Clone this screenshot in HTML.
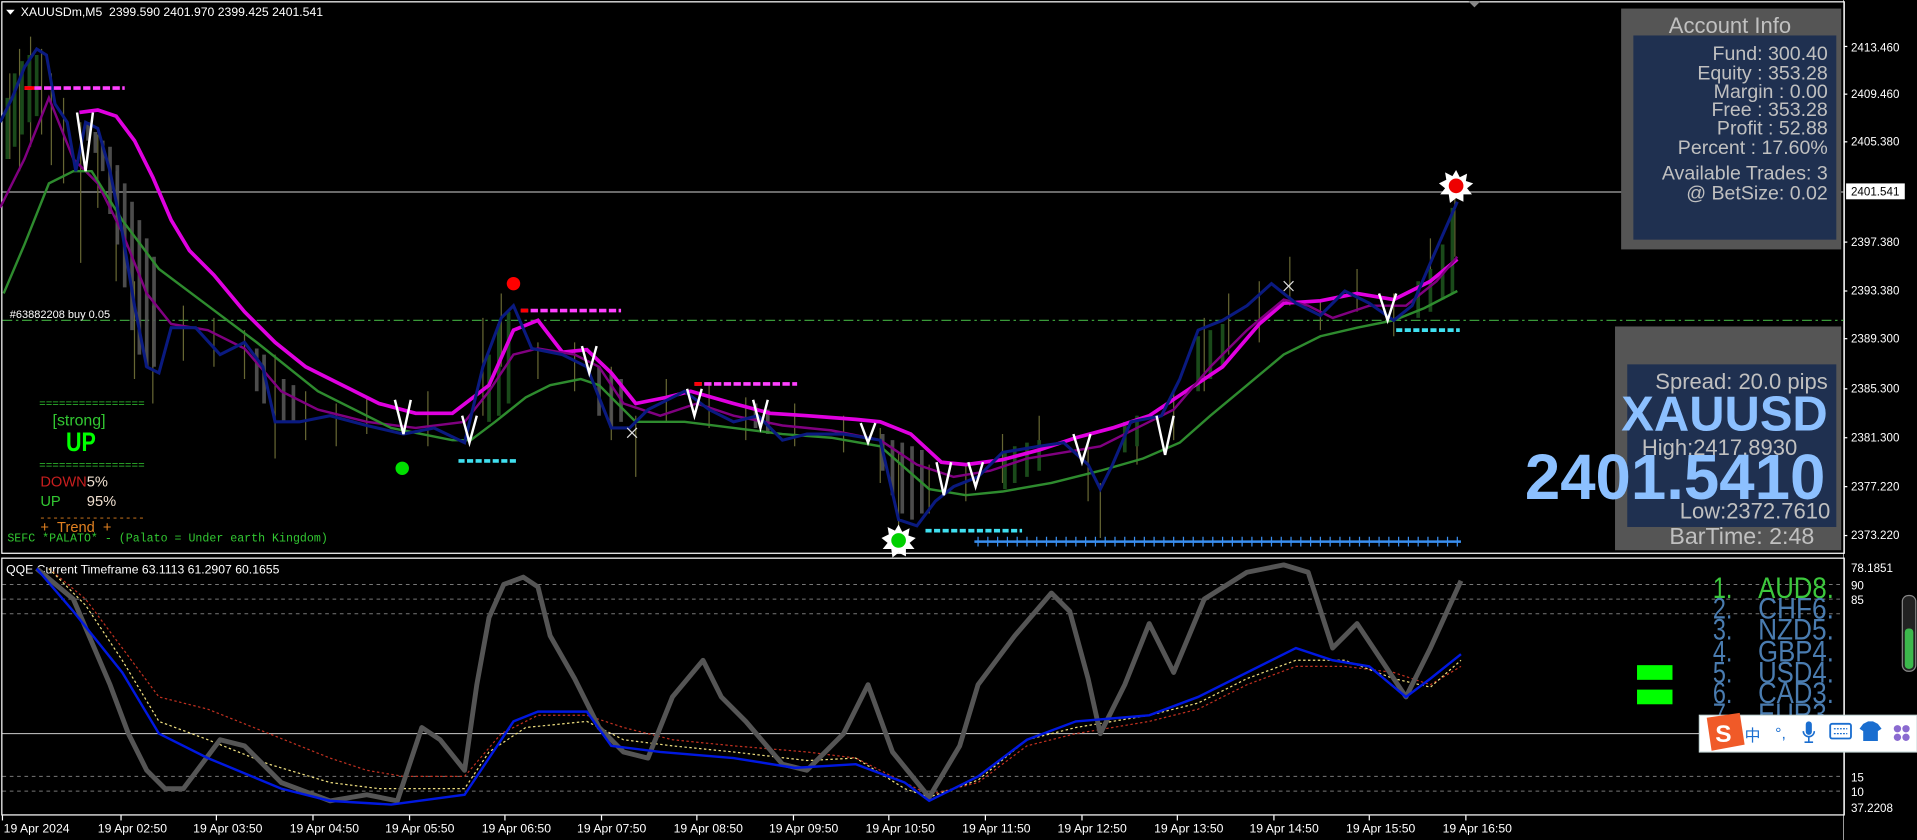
<!DOCTYPE html>
<html><head><meta charset="utf-8"><style>
html,body{margin:0;padding:0;background:#000;overflow:hidden}
svg{display:block}
text{font-family:"Liberation Sans",sans-serif}
.m{font-family:"Liberation Mono","DejaVu Sans Mono",monospace}
</style></head><body>
<svg width="1917" height="840" viewBox="0 0 1568 687" preserveAspectRatio="none" xmlns="http://www.w3.org/2000/svg" xml:space="preserve">
<rect width="1568" height="687" fill="#000"/>
<rect x="1.5" y="1.5" width="1507" height="451" fill="none" stroke="#fff" stroke-width="1"/>
<rect x="1.5" y="456.5" width="1507" height="210" fill="none" stroke="#fff" stroke-width="1"/>
<line x1="1508" y1="0" x2="1508" y2="687" stroke="#fff" stroke-width="0.5"/>
<polygon points="1201,1 1211,1 1206,6" fill="#888"/>
<polygon points="5,8 12,8 8.5,12" fill="#fff"/>
<text x="17" y="13" font-size="10" fill="#fff">XAUUSDm,M5&#160;&#160;2399.590 2401.970 2399.425 2401.541</text>
<g font-size="9.5" fill="#fff">
<text x="1514" y="42">2413.460</text><text x="1514" y="80">2409.460</text><text x="1514" y="119">2405.380</text>
<text x="1514" y="201">2397.380</text><text x="1514" y="241">2393.380</text><text x="1514" y="280">2389.300</text>
<text x="1514" y="321">2385.300</text><text x="1514" y="361">2381.300</text><text x="1514" y="401">2377.220</text><text x="1514" y="441">2373.220</text>
</g>
<g stroke="#fff" stroke-width="1"><line x1="1508" y1="38" x2="1511" y2="38"/><line x1="1508" y1="77" x2="1511" y2="77"/><line x1="1508" y1="116" x2="1511" y2="116"/><line x1="1508" y1="198" x2="1511" y2="198"/><line x1="1508" y1="238" x2="1511" y2="238"/><line x1="1508" y1="277" x2="1511" y2="277"/><line x1="1508" y1="318" x2="1511" y2="318"/><line x1="1508" y1="358" x2="1511" y2="358"/><line x1="1508" y1="398" x2="1511" y2="398"/><line x1="1508" y1="438" x2="1511" y2="438"/></g>
<line x1="2" y1="157" x2="1508" y2="157" stroke="#aaa" stroke-width="1"/>
<rect x="1510" y="150" width="48" height="13" fill="#fff"/>
<text x="1514" y="160" font-size="9.5" fill="#000">2401.541</text>
<line x1="2" y1="262" x2="1508" y2="262" stroke="#3a9a3a" stroke-width="1" stroke-dasharray="8,3,2,3"/>
<text x="8" y="260" font-size="9" fill="#fff">#63882208 buy 0.05</text>
<g stroke="#666633" stroke-width="1">
<path d="M8,60V130M16,40V140M25,30V120M34,40V110M42,60V135M52,80V150M66,100V215M80,110V170M95,140V230M110,230V310M125,250V330M150,250V295M175,260V300M200,270V310M225,290V375M250,320V360M275,330V365M300,325V355M350,320V365M395,260V340M410,240V300M440,280V310M470,280V320M500,300V360M520,340V390M545,310V345M580,315V350M610,325V360M650,330V365M690,340V370M720,350V395M735,370V430M760,380V420M790,380V410M820,355V395M850,340V380M890,360V410M900,395V440M930,340V380M960,320V360M985,260V320M1005,240V290M1030,230V280M1055,210V250M1080,245V270M1110,220V255M1140,240V275M1170,195V240M1190,150V210"/>
</g>
<g stroke="#555" stroke-width="3" opacity="0.9">
<path d="M72,100V115M78,108V125M84,115V140M90,120V175M96,135V200M102,150V235M108,165V270M114,180V290M120,195V300M126,210V300M210,285V320M216,290V330M232,310V345M240,315V345M490,300V340M500,305V350M508,310V345M618,330V350M628,335V355M722,355V385M730,360V405M738,362V420M746,365V425M754,368V420"/>
</g>
<g stroke="#1a4a1a" stroke-width="3">
<path d="M6,80V130M12,60V120M18,50V110M24,45V100M30,45V95M400,290V345M408,265V340M416,255V330M822,370V400M830,365V395M840,362V390M850,360V385M920,345V370M930,340V365M980,275V320M990,270V310M1000,265V300M1160,230V260M1170,220V255M1180,200V245M1188,170V240"/>
</g>
<polyline fill="none" stroke="#e000e0" stroke-width="3" points="65,92 80,90 95,95 110,115 125,145 140,180 155,205 175,225 200,255 225,280 250,300 280,315 310,330 340,338 370,338 400,315 420,270 440,262 460,288 480,286 500,305 520,330 545,325 565,320 600,330 630,338 660,340 700,343 720,345 745,355 770,378 790,380 820,376 850,368 880,358 910,350 940,340 970,320 1000,300 1030,265 1050,248 1080,246 1110,240 1140,245 1170,230 1192,212"/>
<polyline fill="none" stroke="#800080" stroke-width="2" points="0,170 20,130 40,80 60,130 80,150 100,190 120,240 140,265 170,270 200,285 230,320 260,335 300,345 340,350 380,345 400,320 420,290 440,285 470,290 490,300 510,330 540,340 570,330 600,340 640,348 680,352 720,360 750,380 780,390 810,385 840,375 870,370 900,365 930,350 960,335 990,300 1020,270 1050,245 1070,250 1090,260 1120,250 1150,250 1175,230 1192,210"/>
<polyline fill="none" stroke="#2e8b2e" stroke-width="2" points="3,240 20,200 40,150 60,140 75,140 100,180 130,220 170,250 210,280 260,320 320,350 370,360 385,360 405,345 430,325 450,315 475,310 490,315 520,345 560,345 600,350 640,355 680,358 720,365 760,400 790,405 820,402 860,395 900,385 935,375 965,362 990,340 1020,315 1050,290 1080,275 1110,268 1140,262 1165,252 1192,238"/>
<polyline fill="none" stroke="#0a1a80" stroke-width="2.5" points="0,100 10,80 20,55 30,40 38,45 45,85 55,100 62,140 70,100 80,105 90,140 100,190 110,250 120,300 130,305 140,268 160,268 180,290 200,280 215,300 225,345 245,345 270,340 300,348 330,355 355,350 380,362 395,300 410,260 420,250 435,285 460,290 480,300 500,350 515,350 530,335 560,320 580,335 600,345 620,340 640,360 660,355 690,355 720,360 735,425 750,430 765,410 780,398 800,390 820,370 850,365 870,362 890,380 900,400 910,380 925,345 950,340 965,310 980,270 1000,262 1020,250 1040,232 1060,248 1080,258 1100,238 1120,248 1140,262 1155,250 1170,215 1192,165"/>
<g fill="none" stroke="#fff" stroke-width="2">
<path d="M63,92L70,140L76,92M323,327L330,355L336,327M378,340L384,362L390,340M476,283L482,305L488,283M562,318L568,340L574,318M616,327L622,350L628,327M704,346L710,362L716,346M766,378L772,405L778,378M792,378L798,398L804,378M878,355L885,378L892,355M946,340L953,372L960,340M1128,240L1135,262L1142,240"/>
</g>
<g stroke-width="3" fill="none">
<line x1="20" y1="72" x2="102" y2="72" stroke="#ff40ff" stroke-dasharray="6,2"/><line x1="20" y1="72" x2="28" y2="72" stroke="#f00"/>
<line x1="426" y1="254" x2="508" y2="254" stroke="#ff40ff" stroke-dasharray="6,2"/><line x1="426" y1="254" x2="432" y2="254" stroke="#f00"/>
<line x1="568" y1="314" x2="652" y2="314" stroke="#ff40ff" stroke-dasharray="6,2"/><line x1="568" y1="314" x2="574" y2="314" stroke="#f00"/>
<line x1="375" y1="377" x2="424" y2="377" stroke="#40e0f0" stroke-dasharray="5,2"/>
<line x1="757" y1="434" x2="836" y2="434" stroke="#40e0f0" stroke-dasharray="5,2"/>
<line x1="1142" y1="270" x2="1194" y2="270" stroke="#40e0f0" stroke-dasharray="5,2"/>
<line x1="797" y1="443" x2="1195" y2="443" stroke="#3a8ff0" stroke-width="2"/>
</g>
<g stroke="#3a8ff0" stroke-width="1"><path d="M800,439V447M808,439V447M816,439V447M824,439V447M832,439V447M840,439V447M848,439V447M856,439V447M864,439V447M872,439V447M880,439V447M888,439V447M896,439V447M904,439V447M912,439V447M920,439V447M928,439V447M936,439V447M944,439V447M952,439V447M960,439V447M968,439V447M976,439V447M984,439V447M992,439V447M1000,439V447M1008,439V447M1016,439V447M1024,439V447M1032,439V447M1040,439V447M1048,439V447M1056,439V447M1064,439V447M1072,439V447M1080,439V447M1088,439V447M1096,439V447M1104,439V447M1112,439V447M1120,439V447M1128,439V447M1136,439V447M1144,439V447M1152,439V447M1160,439V447M1168,439V447M1176,439V447M1184,439V447M1192,439V447"/></g>
<g stroke="#ddd" stroke-width="1"><path d="M513,350l8,8M521,350l-8,8M1050,230l8,8M1058,230l-8,8"/></g>
<circle cx="420" cy="232" r="5.5" fill="#f00"/>
<circle cx="329" cy="383" r="5.5" fill="#00e000"/>
<polygon points="1191,139 1194,145 1200,142 1199,148 1205,150 1200,154 1204,159 1197,159 1197,165 1191,162 1186,166 1185,159 1178,159 1182,154 1177,150 1183,147 1182,141 1188,144" fill="#fff"/>
<circle cx="1191" cy="152" r="6" fill="#e00"/>
<polygon points="735,429 738,435 744,432 743,438 749,440 744,444 748,449 741,449 741,455 735,452 730,456 729,449 722,449 726,444 721,440 727,437 726,431 732,434" fill="#fff"/>
<circle cx="735" cy="442" r="6" fill="#00d000"/>
<g class="m" font-size="9">
<text x="32" y="333" fill="#32c832" class="m">================</text>
<text x="32" y="383" fill="#32c832" class="m">================</text>
<text x="32" y="426" fill="#e08020" class="m">----------------</text>
<text x="6" y="443" fill="#32c832" class="m" font-size="9.5">SEFC *PALATO* - (Palato = Under earth Kingdom)</text>
</g>
<text x="43" y="348" font-size="13" fill="#32c832">[strong]</text>
<text x="54" y="369" font-size="22" font-weight="bold" fill="#00ff00" transform="translate(54,0) scale(0.8,1) translate(-54,0)">UP</text>
<text x="33" y="398" font-size="12" fill="#c81e1e">DOWN<tspan fill="#f0e0d0">5%</tspan></text>
<text x="33" y="414" font-size="12" fill="#32c832">UP<tspan x="71" fill="#f0e0d0">95%</tspan></text>
<text x="33" y="435" font-size="12" fill="#e08020">+&#160;&#160;Trend&#160;&#160;+</text>
<rect x="1326" y="7" width="180" height="197" fill="#555"/>
<rect x="1336" y="29" width="166" height="167" fill="#1f3050"/>
<g font-size="16" fill="#c0c0c0" text-anchor="end">
<text x="1415" y="27" text-anchor="middle" font-size="18">Account Info</text>
<text x="1495" y="49">Fund: 300.40</text>
<text x="1495" y="65">Equity : 353.28</text>
<text x="1495" y="80">Margin : 0.00</text>
<text x="1495" y="95">Free : 353.28</text>
<text x="1495" y="110">Profit : 52.88</text>
<text x="1495" y="126">Percent : 17.60%</text>
<text x="1495" y="147">Available Trades: 3</text>
<text x="1495" y="163">@ BetSize: 0.02</text>
</g>
<rect x="1321" y="267" width="185" height="183" fill="#555"/>
<rect x="1331" y="298" width="171" height="133" fill="#1f3050"/>
<g text-anchor="end">
<text x="1495" y="318" font-size="18" fill="#c0c0c0">Spread: 20.0 pips</text>
<text x="1495" y="352" font-size="40" font-weight="bold" fill="#8cc0ff">XAUUSD</text>
<text x="1470" y="372" font-size="18" fill="#c0c0c0">High:2417.8930</text>
<text x="1493" y="408" font-size="52" font-weight="bold" fill="#8cc0ff">2401.5410</text>
<text x="1497" y="424" font-size="18" fill="#c0c0c0">Low:2372.7610</text>
<text x="1484" y="445" font-size="19" fill="#c0c0c0">BarTime: 2:48</text>
</g>
<text x="5" y="469" font-size="10" fill="#fff">QQE Current Timeframe 63.1113 61.2907 60.1655</text>
<g stroke="#777" stroke-width="0.8" stroke-dasharray="3,3">
<line x1="2" y1="478" x2="1508" y2="478"/><line x1="2" y1="490" x2="1508" y2="490"/><line x1="2" y1="502" x2="1508" y2="502"/>
<line x1="2" y1="635" x2="1508" y2="635"/><line x1="2" y1="647" x2="1508" y2="647"/>
</g>
<line x1="2" y1="600" x2="1508" y2="600" stroke="#ccc" stroke-width="0.8"/>
<g font-size="9.5" fill="#fff"><text x="1514" y="468">78.1851</text><text x="1514" y="482">90</text><text x="1514" y="494">85</text><text x="1514" y="639">15</text><text x="1514" y="651">10</text><text x="1514" y="664">37.2208</text></g>
<polyline fill="none" stroke="#c03020" stroke-width="1" stroke-dasharray="2,2" points="40,465 70,490 100,530 130,570 170,580 220,600 270,620 300,630 330,635 380,635 410,600 440,585 480,585 510,595 550,605 600,610 660,615 700,620 740,640 760,650 800,640 840,610 880,600 940,590 980,580 1020,560 1060,545 1100,545 1140,550 1170,560 1195,545"/>
<polyline fill="none" stroke="#f0e080" stroke-width="1" stroke-dasharray="2,2" points="40,465 70,495 100,540 130,590 170,605 220,625 270,640 310,645 340,645 380,645 400,615 430,595 480,590 510,605 550,610 600,615 660,622 700,620 740,645 760,652 800,638 840,605 880,595 940,585 980,575 1020,555 1060,540 1100,540 1140,555 1170,562 1195,540"/>
<polyline fill="none" stroke="#555" stroke-width="4" stroke-linejoin="round" points="30,465 60,490 75,525 90,560 105,600 120,630 135,645 150,645 165,625 180,605 200,610 230,640 270,655 300,650 325,655 345,595 360,605 380,630 390,560 400,505 412,478 428,472 440,480 450,520 470,555 490,595 510,615 530,620 550,570 575,540 590,570 610,590 640,625 660,630 690,600 710,560 730,615 760,652 785,610 800,560 830,520 860,485 875,500 890,555 900,600 920,560 940,510 960,550 985,490 1020,468 1050,462 1070,468 1090,530 1110,510 1130,540 1150,570 1170,530 1195,475"/>
<polyline fill="none" stroke="#0018e0" stroke-width="2" points="30,465 60,500 100,550 130,600 170,620 230,645 270,655 320,658 380,650 400,620 420,590 440,582 480,582 500,610 540,615 600,620 650,628 700,625 740,640 760,655 800,635 840,605 880,590 940,585 980,570 1020,550 1060,530 1090,540 1120,545 1150,570 1170,555 1195,535"/>
<rect x="1339" y="544" width="29" height="12" fill="#00ff00"/>
<rect x="1339" y="564" width="29" height="12" fill="#00ff00"/>
<g font-size="24">
<text x="1401" y="489" fill="#3cc83c" textLength="16" lengthAdjust="spacingAndGlyphs">1.</text><text x="1438" y="489" fill="#3cc83c" textLength="62" lengthAdjust="spacingAndGlyphs">AUD8.</text>
<g fill="#4a7cb0">
<text x="1401" y="506" textLength="16" lengthAdjust="spacingAndGlyphs">2.</text><text x="1438" y="506" textLength="62" lengthAdjust="spacingAndGlyphs">CHF6.</text>
<text x="1401" y="523" textLength="16" lengthAdjust="spacingAndGlyphs">3.</text><text x="1438" y="523" textLength="62" lengthAdjust="spacingAndGlyphs">NZD5.</text>
<text x="1401" y="541" textLength="16" lengthAdjust="spacingAndGlyphs">4.</text><text x="1438" y="541" textLength="62" lengthAdjust="spacingAndGlyphs">GBP4.</text>
<text x="1401" y="558" textLength="16" lengthAdjust="spacingAndGlyphs">5.</text><text x="1438" y="558" textLength="62" lengthAdjust="spacingAndGlyphs">USD4.</text>
<text x="1401" y="575" textLength="16" lengthAdjust="spacingAndGlyphs">6.</text><text x="1438" y="575" textLength="62" lengthAdjust="spacingAndGlyphs">CAD3.</text>
<text x="1401" y="592" textLength="16" lengthAdjust="spacingAndGlyphs">7.</text><text x="1438" y="592" textLength="62" lengthAdjust="spacingAndGlyphs">EUR3.</text>
</g></g>
<rect x="1556" y="487" width="11" height="62" rx="5" fill="#222" stroke="#888"/>
<rect x="1558" y="514" width="7" height="33" rx="3" fill="#3cb84c"/>
<rect x="1390" y="585" width="178" height="30" fill="#fff" stroke="#cdd"/>
<path d="M1396,587 L1423,583 L1427,609 L1400,614 Z" fill="#f05a28"/>
<text x="1403" y="607" font-size="20" font-weight="bold" fill="#fff">S</text>
<text x="1427" y="606" font-size="13" fill="#1a6ed0" font-family="Noto Sans CJK SC,sans-serif">中</text>
<text x="1452" y="604" font-size="13" fill="#1a6ed0">°,</text>
<rect x="1477" y="590" width="5" height="11" rx="2.5" fill="#1a6ed0"/><path d="M1475,598a4.5,4.5 0 0 0 9,0M1479.5,603v4M1476,607h7" stroke="#1a6ed0" fill="none" stroke-width="1.3"/>
<rect x="1497" y="592" width="17" height="12" rx="1.5" fill="none" stroke="#1a6ed0" stroke-width="1.5"/><path d="M1500,596h11M1500,600h11" stroke="#1a6ed0" stroke-dasharray="1.5,1"/>
<path d="M1524,592l4,-2h4l4,2l3,4l-3,2v8h-12v-8l-3,-2z" fill="#1a6ed0"/>
<g fill="#8a6ad0"><circle cx="1552" cy="596" r="3"/><circle cx="1559" cy="596" r="3"/><circle cx="1552" cy="603" r="3"/><circle cx="1559" cy="603" r="3"/></g>
<g stroke="#fff"><line x1="2" y1="667" x2="2" y2="671"/><line x1="99" y1="667" x2="99" y2="671"/><line x1="177" y1="667" x2="177" y2="671"/><line x1="256" y1="667" x2="256" y2="671"/><line x1="335" y1="667" x2="335" y2="671"/><line x1="413" y1="667" x2="413" y2="671"/><line x1="492" y1="667" x2="492" y2="671"/><line x1="570" y1="667" x2="570" y2="671"/><line x1="649" y1="667" x2="649" y2="671"/><line x1="727" y1="667" x2="727" y2="671"/><line x1="806" y1="667" x2="806" y2="671"/><line x1="885" y1="667" x2="885" y2="671"/><line x1="963" y1="667" x2="963" y2="671"/><line x1="1042" y1="667" x2="1042" y2="671"/><line x1="1120" y1="667" x2="1120" y2="671"/><line x1="1199" y1="667" x2="1199" y2="671"/></g>
<g font-size="10" fill="#fff">
<text x="3" y="681">19 Apr 2024</text><text x="80" y="681">19 Apr 02:50</text><text x="158" y="681">19 Apr 03:50</text><text x="237" y="681">19 Apr 04:50</text><text x="315" y="681">19 Apr 05:50</text><text x="394" y="681">19 Apr 06:50</text><text x="472" y="681">19 Apr 07:50</text><text x="551" y="681">19 Apr 08:50</text><text x="629" y="681">19 Apr 09:50</text><text x="708" y="681">19 Apr 10:50</text><text x="787" y="681">19 Apr 11:50</text><text x="865" y="681">19 Apr 12:50</text><text x="944" y="681">19 Apr 13:50</text><text x="1022" y="681">19 Apr 14:50</text><text x="1101" y="681">19 Apr 15:50</text><text x="1180" y="681">19 Apr 16:50</text>
</g>
</svg>
</body></html>
